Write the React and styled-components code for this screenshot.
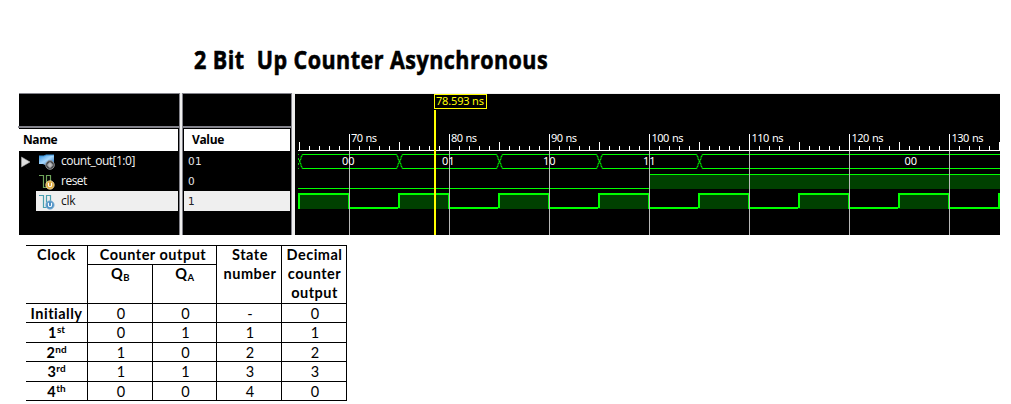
import React from "react";
import styled, { createGlobalStyle } from "styled-components";

const GlobalStyle = createGlobalStyle`
  body {
    margin: 0;
    background: #fff;
    overflow: hidden;
  }
`;

const Page = styled.main`
  width: 1011px;
  height: 404px;
  overflow: hidden;
  background: #fff;
  color: #000;
`;

const Title = styled.h1`
  margin: 0;
  padding: 42px 0 0 194px;
  height: 51px;
  font: 700 25px/34px "Open Sans", sans-serif;
  letter-spacing: 0.55px;
  white-space: pre;
  transform: scaleX(0.86);
  transform-origin: 194px 0;
  -webkit-text-stroke: 0.6px #000;
`;

const Simulator = styled.section`
  display: flex;
  width: 981px;
  height: 142px;
  margin-left: 19px;
  background: #efefef;
`;

const Column = styled.div`
  display: flex;
  flex-direction: column;
  box-sizing: border-box;
  width: ${(p) => p.$width}px;
  margin-right: ${(p) => p.$gap}px;
  padding: 0 1px 0 ${(p) => (p.$ruled ? 1 : 0)}px;
  border: solid #83838b;
  border-width: 1px 1px 0 ${(p) => (p.$ruled ? 1 : 0)}px;
  background: #000;
`;

const Blank = styled.div`
  height: 32px;
  margin: 0 -1px 1px;
  border-bottom: 2px solid #83838b;
`;

const Heading = styled.div`
  height: 22px;
  padding-left: ${(p) => p.$indent}px;
  background: #fff;
  font: 700 12px/22px "Open Sans", sans-serif;
  letter-spacing: ${(p) => p.$tracking}px;
`;

const Signal = styled.div`
  display: flex;
  align-items: center;
  height: 20px;
  color: #f2f2f2;
  font: 12px/20px "Open Sans", sans-serif;
`;

const Expander = styled.span`
  display: flex;
  width: 17px;
`;

const SignalBody = styled.div`
  display: flex;
  flex: 1;
  align-items: center;
  height: 20px;
  gap: 6px;
  padding-left: 2px;
  background: ${(p) => (p.$selected ? "#efefef" : "transparent")};
  color: ${(p) => (p.$selected ? "#111" : "inherit")};
  letter-spacing: ${(p) => p.$tracking || 0}px;
`;

const SignalName = styled.span`
  height: 20px;
  line-height: 20px;
`;

const Value = styled.div`
  height: 20px;
  padding-left: 4px;
  background: ${(p) => (p.$selected ? "#efefef" : "transparent")};
  color: ${(p) => (p.$selected ? "#222" : "#e4e4e4")};
  font: 10.5px/21px "DejaVu Sans", sans-serif;
  letter-spacing: 0.3px;
`;

const Wave = styled.svg`
  display: block;
  width: 705px;
  height: 141px;
  margin-top: 1px;
  background: #000;
  font: 11px "Noto Sans", sans-serif;
`;

const TimeLabels = styled.g`
  fill: #fff;
  word-spacing: 1px;
`;

const TruthTable = styled.div`
  display: grid;
  grid-template-columns: 62px 65px 64px 65px 65px;
  grid-template-rows: 19px 39px 19px 20px 19px 20px 19px;
  width: 321px;
  margin: 10px 0 0 26px;
  border-top: 1px solid #000;
`;

const Cell = styled.div`
  grid-row: span ${(p) => p.$rows || 1};
  grid-column: span ${(p) => p.$cols || 1};
  padding-left: ${(p) => p.$shift || 0}px;
  border: solid #000;
  border-width: 0 1px 1px 0;
  text-align: center;
  font: ${(p) => (p.$bold ? 700 : 400)} 14.5px/19px Lato, sans-serif;
  letter-spacing: ${(p) => (p.$bold ? 0.5 : 0)}px;
  white-space: pre-line;
`;

const HeadText = styled.div`
  margin-top: -1px;
`;

const Sup = styled.sup`
  font-size: 10px;
  line-height: 0;
  vertical-align: 5px;
  letter-spacing: 0;
`;

const Sub = styled.sub`
  font-size: 9.5px;
  line-height: 0;
  vertical-align: -2px;
`;

function BusIcon() {
  return (
    <svg width="17" height="17" viewBox="0 0 17 17">
      <defs>
        <linearGradient id="bus" x1="0" y1="0" x2="1" y2="1">
          <stop offset="0" stopColor="#2f8ee0" />
          <stop offset="0.5" stopColor="#a9d8fa" />
          <stop offset="1" stopColor="#1565b8" />
        </linearGradient>
      </defs>
      <path d="M1 3H6L8 2H16V12H7L5 11H1Z" fill="url(#bus)" />
      <path d="M1 3H6L8 2H16" stroke="#3b93d8" fill="none" />
      <circle cx="12" cy="12" r="4.4" fill="#4b4d50" stroke="#999" strokeWidth="0.8" />
      <path d="M12 9.5V14.5M9.5 12H14.5" stroke="#ddd" strokeWidth="1.2" />
      <circle cx="12" cy="12" r="2" stroke="#ccc" fill="none" strokeWidth="0.7" />
    </svg>
  );
}

function LogicIcon({ line, badge, edge }) {
  return (
    <svg width="17" height="17" viewBox="0 0 17 17">
      <path d="M1 2.5H5.5V14.5H8.5V2.5H12.5V8" stroke={line} fill="none" strokeWidth="1.2" />
      <circle cx="12" cy="12" r="4.2" fill={badge} stroke={edge} strokeWidth="0.8" />
      <path d="M10.4 9.8V12Q10.4 13.8 12 13.8T13.6 12V9.8" stroke="#fff" fill="none" strokeWidth="1.1" />
    </svg>
  );
}

const GREEN = "#00ff00";
const FILL = "#004000";
const START = 298;
const END = 1000;
const majors = [349, 449, 549, 649, 749, 849, 949];
const ticks = Array.from({ length: 71 }, (_, i) => 299 + i * 10);
const crossings = [399, 499, 599, 699];
const busLines = [
  [303, 396],
  [403, 496],
  [503, 596],
  [603, 696],
  [703, END],
];
const busLabels = [
  ["00", 342],
  ["01", 442],
  ["10", 543],
  ["11", 643],
  ["00", 904.5],
];

function Crossing({ x }) {
  return (
    <path
      d={`M${x - 3} 154.5h1v2h1v3h1v2h1v2h1v3h1v2h1M${x + 4} 154.5h-1v2h-1v3h-1v2h-1v2h-1v3h-1v2h-1`}
      stroke={GREEN}
      strokeWidth="0.8"
      fill="none"
    />
  );
}

function Waveform() {
  return (
    <Wave viewBox="295 94 705 141">
      <g shapeRendering="crispEdges">
        {ticks.map((x) => {
          const top = (x - 349) % 100 === 0 ? 134 : (x - 299) % 100 === 0 ? 142 : 146;
          return <rect key={x} x={x} y={top} width="1" height={150 - top} fill="#fff" />;
        })}
        <rect x={START} y="150" width={END - START} height="1" fill="#fff" />

        {busLines.map(([a, b]) => (
          <g key={a} fill={GREEN}>
            <rect x={a} y="154" width={b - a} height="1" />
            <rect x={a} y="168" width={b - a} height="1" />
          </g>
        ))}

        <rect x={START} y="188" width={649 - START} height="1" fill={GREEN} />
        <rect x="649" y="175" width={END - 649} height="14" fill={FILL} />
        <rect x="649" y="174" width={END - 649} height="1" fill={GREEN} />

        {[298, 398, 498, 598, 698, 798, 898].map((x) => (
          <g key={x}>
            <rect x={x} y="193" width="51" height="16" fill={FILL} />
            <path
              d={`M${x + 1} ${x === 298 ? 209 : 208}V194H${x + 51}V208H${x + 101}`}
              stroke={GREEN}
              strokeWidth="2"
              fill="none"
            />
          </g>
        ))}
        <path d="M999 209V193" stroke={GREEN} strokeWidth="2" />

        {majors.map((x) => (
          <rect key={x} x={x} y="151" width="1" height="84" fill="#b9b9b9" />
        ))}
      </g>

      {crossings.map((x) => (
        <Crossing key={x} x={x} />
      ))}
      <path
        d="M303 154.5h-1v2h-1v3h-1v4h1v3h1v2h1M298 154.5h1M298 168.5h1M298.5 158v2M299.5 160v2M298.5 163v2"
        stroke={GREEN}
        strokeWidth="0.8"
        fill="none"
      />

      <TimeLabels>
        {majors.map((x, i) => (
          <text key={x} x={x + (i < 3 ? 2 : 2.5)} y="142" textLength={i < 3 ? 26 : 32}>
            {70 + i * 10} ns
          </text>
        ))}
        {busLabels.map(([label, x]) => (
          <text key={x} x={x} y="165" textLength="12.5">
            {label}
          </text>
        ))}
      </TimeLabels>

      <rect x="434" y="110" width="2" height="125" fill="#ffff00" />
      <rect x="434.5" y="94.5" width="52" height="14" fill="#000" stroke="#ffff00" />
      <text x="436" y="105" fill="#ffff00" textLength="48">
        78.593 ns
      </text>
    </Wave>
  );
}

const rows = [
  ["Initially", "", 0, 0, "-", 0],
  ["1", "st", 0, 1, 1, 1],
  ["2", "nd", 1, 0, 2, 2],
  ["3", "rd", 1, 1, 3, 3],
  ["4", "th", 0, 0, 4, 0],
];

export default function App() {
  return (
    <Page>
      <GlobalStyle />
      <Title>2 Bit  Up Counter Asynchronous</Title>
      <Simulator>
        <Column $width={161} $gap={2}>
          <Blank />
          <Heading $indent={4} $tracking={-0.4}>Name</Heading>
          <Signal>
            <Expander>
              <svg width="14" height="14" viewBox="0 0 14 14">
                <path d="M2.5 3L11 8L2.5 13Z" fill="#dedede" stroke="#aaa" strokeWidth="0.6" />
              </svg>
            </Expander>
            <SignalBody $tracking={-0.5}>
              <BusIcon />
              <SignalName>count_out[1:0]</SignalName>
            </SignalBody>
          </Signal>
          <Signal>
            <Expander />
            <SignalBody $tracking={-0.5}>
              <LogicIcon line="#6fa55a" badge="#dba83c" edge="#f2dfa8" />
              <SignalName>reset</SignalName>
            </SignalBody>
          </Signal>
          <Signal>
            <Expander />
            <SignalBody $selected $tracking={-0.3}>
              <LogicIcon line="#4a9fb0" badge="#4b8fc4" edge="#8fb9d6" />
              <SignalName>clk</SignalName>
            </SignalBody>
          </Signal>
        </Column>
        <Column $width={110} $gap={3} $ruled>
          <Blank />
          <Heading $indent={8} $tracking={-0.35}>Value</Heading>
          <Value>01</Value>
          <Value>0</Value>
          <Value $selected>1</Value>
        </Column>
        <Waveform />
      </Simulator>

      <TruthTable>
        <Cell $bold $rows={2}><HeadText>Clock</HeadText></Cell>
        <Cell $bold $cols={2} $shift={2}><HeadText>Counter output</HeadText></Cell>
        <Cell $bold $rows={2} $shift={2}><HeadText>{"State\nnumber"}</HeadText></Cell>
        <Cell $bold $rows={2} $shift={1}><HeadText>{"Decimal\ncounter\noutput"}</HeadText></Cell>
        <Cell $bold $shift={1}><HeadText>Q<Sub>B</Sub></HeadText></Cell>
        <Cell $bold $shift={1}><HeadText>Q<Sub>A</Sub></HeadText></Cell>
        {rows.map(([name, suffix, ...bits]) => (
          <React.Fragment key={name}>
            <Cell $bold>
              {name}
              {suffix && <Sup>{suffix}</Sup>}
            </Cell>
            {bits.map((bit, i) => (
              <Cell key={i} $shift={2}>{bit}</Cell>
            ))}
          </React.Fragment>
        ))}
      </TruthTable>
    </Page>
  );
}
